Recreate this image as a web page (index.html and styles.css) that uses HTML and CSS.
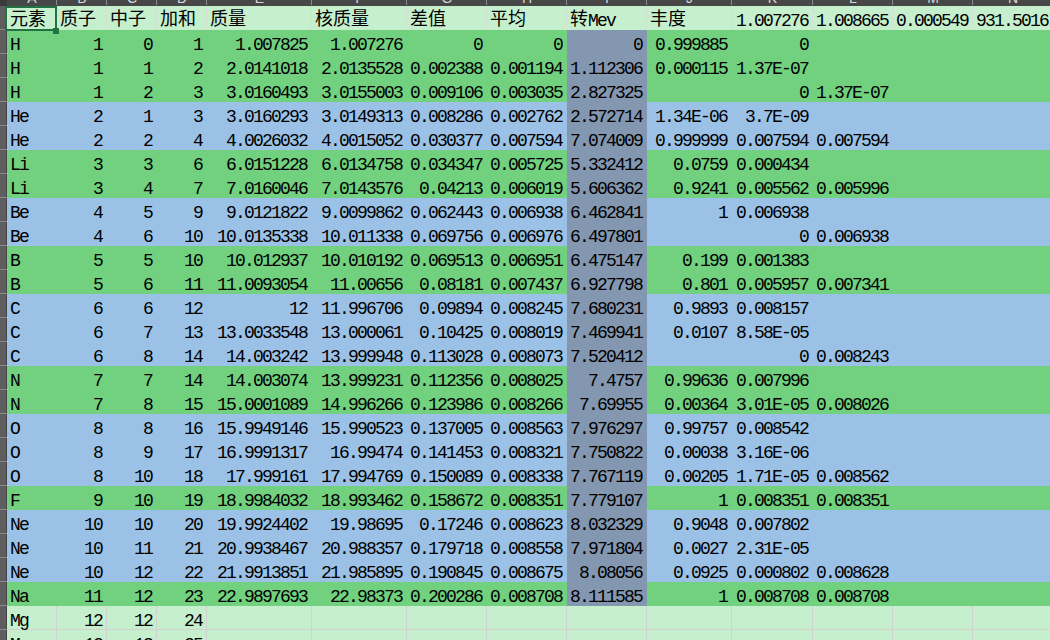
FILE: index.html
```html
<!DOCTYPE html>
<html lang="zh">
<head>
<meta charset="utf-8">
<title>Sheet</title>
<link rel="stylesheet" href="styles.css">
</head>
<body>
<div class="sheet">
  <div class="row cols">
    <i class="corner"></i><span>A</span><span>B</span><span>C</span><span>D</span><span>E</span><span>F</span><span>G</span><span>H</span><span>I</span><span>J</span><span>K</span><span>L</span><span>M</span><span>N</span>
  </div>
  <div class="row l hdr">
    <i class="rh"></i><span class="c"><b class="cj">元素</b></span><span class="c"><b class="cj">质子</b></span><span class="c"><b class="cj">中子</b></span><span class="c"><b class="cj">加和</b></span><span class="c"><b class="cj">质量</b></span><span class="c"><b class="cj">核质量</b></span><span class="c"><b class="cj">差值</b></span><span class="c"><b class="cj">平均</b></span><span class="c"><b class="cj">转</b>Mev</span><span class="c"><b class="cj">丰度</b></span><span class="c n">1.007276</span><span class="c n">1.008665</span><span class="c n">0.000549</span><span class="c n">931.5016</span>
  </div>
  <div class="row g"><i class="rh"></i><span class="c">H</span><span class="c n">1</span><span class="c n">0</span><span class="c n">1</span><span class="c n">1.007825</span><span class="c n">1.007276</span><span class="c n">0</span><span class="c n">0</span><span class="c n i">0</span><span class="c n">0.999885</span><span class="c n">0</span><span class="c n"></span></div>
  <div class="row g"><i class="rh"></i><span class="c">H</span><span class="c n">1</span><span class="c n">1</span><span class="c n">2</span><span class="c n">2.0141018</span><span class="c n">2.0135528</span><span class="c n">0.002388</span><span class="c n">0.001194</span><span class="c n i">1.112306</span><span class="c n">0.000115</span><span class="c n">1.37E-07</span><span class="c n"></span></div>
  <div class="row g"><i class="rh"></i><span class="c">H</span><span class="c n">1</span><span class="c n">2</span><span class="c n">3</span><span class="c n">3.0160493</span><span class="c n">3.0155003</span><span class="c n">0.009106</span><span class="c n">0.003035</span><span class="c n i">2.827325</span><span class="c n"></span><span class="c n">0</span><span class="c n">1.37E-07</span></div>
  <div class="row b"><i class="rh"></i><span class="c">He</span><span class="c n">2</span><span class="c n">1</span><span class="c n">3</span><span class="c n">3.0160293</span><span class="c n">3.0149313</span><span class="c n">0.008286</span><span class="c n">0.002762</span><span class="c n i">2.572714</span><span class="c n">1.34E-06</span><span class="c n">3.7E-09</span><span class="c n"></span></div>
  <div class="row b"><i class="rh"></i><span class="c">He</span><span class="c n">2</span><span class="c n">2</span><span class="c n">4</span><span class="c n">4.0026032</span><span class="c n">4.0015052</span><span class="c n">0.030377</span><span class="c n">0.007594</span><span class="c n i">7.074009</span><span class="c n">0.999999</span><span class="c n">0.007594</span><span class="c n">0.007594</span></div>
  <div class="row g"><i class="rh"></i><span class="c">Li</span><span class="c n">3</span><span class="c n">3</span><span class="c n">6</span><span class="c n">6.0151228</span><span class="c n">6.0134758</span><span class="c n">0.034347</span><span class="c n">0.005725</span><span class="c n i">5.332412</span><span class="c n">0.0759</span><span class="c n">0.000434</span><span class="c n"></span></div>
  <div class="row g"><i class="rh"></i><span class="c">Li</span><span class="c n">3</span><span class="c n">4</span><span class="c n">7</span><span class="c n">7.0160046</span><span class="c n">7.0143576</span><span class="c n">0.04213</span><span class="c n">0.006019</span><span class="c n i">5.606362</span><span class="c n">0.9241</span><span class="c n">0.005562</span><span class="c n">0.005996</span></div>
  <div class="row b"><i class="rh"></i><span class="c">Be</span><span class="c n">4</span><span class="c n">5</span><span class="c n">9</span><span class="c n">9.0121822</span><span class="c n">9.0099862</span><span class="c n">0.062443</span><span class="c n">0.006938</span><span class="c n i">6.462841</span><span class="c n">1</span><span class="c n">0.006938</span><span class="c n"></span></div>
  <div class="row b"><i class="rh"></i><span class="c">Be</span><span class="c n">4</span><span class="c n">6</span><span class="c n">10</span><span class="c n">10.0135338</span><span class="c n">10.011338</span><span class="c n">0.069756</span><span class="c n">0.006976</span><span class="c n i">6.497801</span><span class="c n"></span><span class="c n">0</span><span class="c n">0.006938</span></div>
  <div class="row g"><i class="rh"></i><span class="c">B</span><span class="c n">5</span><span class="c n">5</span><span class="c n">10</span><span class="c n">10.012937</span><span class="c n">10.010192</span><span class="c n">0.069513</span><span class="c n">0.006951</span><span class="c n i">6.475147</span><span class="c n">0.199</span><span class="c n">0.001383</span><span class="c n"></span></div>
  <div class="row g"><i class="rh"></i><span class="c">B</span><span class="c n">5</span><span class="c n">6</span><span class="c n">11</span><span class="c n">11.0093054</span><span class="c n">11.00656</span><span class="c n">0.08181</span><span class="c n">0.007437</span><span class="c n i">6.927798</span><span class="c n">0.801</span><span class="c n">0.005957</span><span class="c n">0.007341</span></div>
  <div class="row b"><i class="rh"></i><span class="c">C</span><span class="c n">6</span><span class="c n">6</span><span class="c n">12</span><span class="c n">12</span><span class="c n">11.996706</span><span class="c n">0.09894</span><span class="c n">0.008245</span><span class="c n i">7.680231</span><span class="c n">0.9893</span><span class="c n">0.008157</span><span class="c n"></span></div>
  <div class="row b"><i class="rh"></i><span class="c">C</span><span class="c n">6</span><span class="c n">7</span><span class="c n">13</span><span class="c n">13.0033548</span><span class="c n">13.000061</span><span class="c n">0.10425</span><span class="c n">0.008019</span><span class="c n i">7.469941</span><span class="c n">0.0107</span><span class="c n">8.58E-05</span><span class="c n"></span></div>
  <div class="row b"><i class="rh"></i><span class="c">C</span><span class="c n">6</span><span class="c n">8</span><span class="c n">14</span><span class="c n">14.003242</span><span class="c n">13.999948</span><span class="c n">0.113028</span><span class="c n">0.008073</span><span class="c n i">7.520412</span><span class="c n"></span><span class="c n">0</span><span class="c n">0.008243</span></div>
  <div class="row g"><i class="rh"></i><span class="c">N</span><span class="c n">7</span><span class="c n">7</span><span class="c n">14</span><span class="c n">14.003074</span><span class="c n">13.999231</span><span class="c n">0.112356</span><span class="c n">0.008025</span><span class="c n i">7.4757</span><span class="c n">0.99636</span><span class="c n">0.007996</span><span class="c n"></span></div>
  <div class="row g"><i class="rh"></i><span class="c">N</span><span class="c n">7</span><span class="c n">8</span><span class="c n">15</span><span class="c n">15.0001089</span><span class="c n">14.996266</span><span class="c n">0.123986</span><span class="c n">0.008266</span><span class="c n i">7.69955</span><span class="c n">0.00364</span><span class="c n">3.01E-05</span><span class="c n">0.008026</span></div>
  <div class="row b"><i class="rh"></i><span class="c">O</span><span class="c n">8</span><span class="c n">8</span><span class="c n">16</span><span class="c n">15.9949146</span><span class="c n">15.990523</span><span class="c n">0.137005</span><span class="c n">0.008563</span><span class="c n i">7.976297</span><span class="c n">0.99757</span><span class="c n">0.008542</span><span class="c n"></span></div>
  <div class="row b"><i class="rh"></i><span class="c">O</span><span class="c n">8</span><span class="c n">9</span><span class="c n">17</span><span class="c n">16.9991317</span><span class="c n">16.99474</span><span class="c n">0.141453</span><span class="c n">0.008321</span><span class="c n i">7.750822</span><span class="c n">0.00038</span><span class="c n">3.16E-06</span><span class="c n"></span></div>
  <div class="row b"><i class="rh"></i><span class="c">O</span><span class="c n">8</span><span class="c n">10</span><span class="c n">18</span><span class="c n">17.999161</span><span class="c n">17.994769</span><span class="c n">0.150089</span><span class="c n">0.008338</span><span class="c n i">7.767119</span><span class="c n">0.00205</span><span class="c n">1.71E-05</span><span class="c n">0.008562</span></div>
  <div class="row g"><i class="rh"></i><span class="c">F</span><span class="c n">9</span><span class="c n">10</span><span class="c n">19</span><span class="c n">18.9984032</span><span class="c n">18.993462</span><span class="c n">0.158672</span><span class="c n">0.008351</span><span class="c n i">7.779107</span><span class="c n">1</span><span class="c n">0.008351</span><span class="c n">0.008351</span></div>
  <div class="row b"><i class="rh"></i><span class="c">Ne</span><span class="c n">10</span><span class="c n">10</span><span class="c n">20</span><span class="c n">19.9924402</span><span class="c n">19.98695</span><span class="c n">0.17246</span><span class="c n">0.008623</span><span class="c n i">8.032329</span><span class="c n">0.9048</span><span class="c n">0.007802</span><span class="c n"></span></div>
  <div class="row b"><i class="rh"></i><span class="c">Ne</span><span class="c n">10</span><span class="c n">11</span><span class="c n">21</span><span class="c n">20.9938467</span><span class="c n">20.988357</span><span class="c n">0.179718</span><span class="c n">0.008558</span><span class="c n i">7.971804</span><span class="c n">0.0027</span><span class="c n">2.31E-05</span><span class="c n"></span></div>
  <div class="row b"><i class="rh"></i><span class="c">Ne</span><span class="c n">10</span><span class="c n">12</span><span class="c n">22</span><span class="c n">21.9913851</span><span class="c n">21.985895</span><span class="c n">0.190845</span><span class="c n">0.008675</span><span class="c n i">8.08056</span><span class="c n">0.0925</span><span class="c n">0.000802</span><span class="c n">0.008628</span></div>
  <div class="row g"><i class="rh"></i><span class="c">Na</span><span class="c n">11</span><span class="c n">12</span><span class="c n">23</span><span class="c n">22.9897693</span><span class="c n">22.98373</span><span class="c n">0.200286</span><span class="c n">0.008708</span><span class="c n i">8.111585</span><span class="c n">1</span><span class="c n">0.008708</span><span class="c n">0.008708</span></div>
  <div class="row l"><i class="rh"></i><span class="c">Mg</span><span class="c n">12</span><span class="c n">12</span><span class="c n">24</span><span class="c n"></span><span class="c n"></span><span class="c n"></span><span class="c n"></span><span class="c n"></span><span class="c n"></span><span class="c n"></span><span class="c n"></span><span class="c n"></span><span class="c n"></span></div>
  <div class="row l"><i class="rh"></i><span class="c">Mg</span><span class="c n">12</span><span class="c n">13</span><span class="c n">25</span><span class="c n"></span><span class="c n"></span><span class="c n"></span><span class="c n"></span><span class="c n"></span><span class="c n"></span><span class="c n"></span><span class="c n"></span><span class="c n"></span><span class="c n"></span></div>
  <div class="sel"></div>
  <div class="handle"></div>
</div>
</body>
</html>
```
FILE: styles.css
```css
html, body {
  margin: 0;
  padding: 0;
  background: #ffffff;
  overflow: hidden;
}

.sheet {
  position: relative;
  width: 1050px;
  height: 640px;
  overflow: hidden;
  font-family: "Liberation Mono", "Noto Sans CJK SC", monospace;
  color: #000;
}

.row {
  display: grid;
  grid-template-columns: 7px 50px 50px 50px 50px 105px 95px 80px 80px 80px 85px 81px 80px 80px 80px;
  height: 24px;
}

.cols {
  height: 6px;
  background: #474747;
  overflow: hidden;
}

.cols span {
  display: block;
  height: 14px;
  margin-top: -9px;
  font-family: "Liberation Sans", sans-serif;
  font-size: 14px;
  line-height: 14px;
  text-align: center;
  color: #d8d8d8;
  box-shadow: inset -1px 0 0 #8a8a8a;
}

.corner {
  background: #3a3a3a;
}

.rh {
  display: block;
  background: #5e5e5e;
  box-shadow: inset 0 -1px 0 #8c8c8c, inset -1px 0 0 #444;
}

.c {
  display: block;
  font-size: 18px;
  line-height: 20px;
  padding: 5px 5px 0 3px;
  letter-spacing: -1.8px;
  white-space: nowrap;
  overflow: hidden;
}

.n {
  text-align: right;
}

.cj {
  font-family: "Noto Sans CJK SC", sans-serif;
  font-weight: 400;
  letter-spacing: 0;
  line-height: 0;
  vertical-align: 1px;
}

.g { background: #71d17f; }
.b { background: #9bc2e6; }
.l { background: #c6efce; }

.g .i, .b .i { background: #8497b0; }

.l .c { box-shadow: inset -1px -1px 0 #d2d2d2; }
.hdr .c { box-shadow: inset -1px 0 0 #d6dfd6; }

.sel {
  position: absolute;
  left: 5px;
  top: 6px;
  width: 52px;
  height: 25px;
  border: 2px solid #217346;
  box-sizing: border-box;
}

.handle {
  position: absolute;
  left: 53px;
  top: 28px;
  width: 6px;
  height: 6px;
  background: #217346;
}
```
